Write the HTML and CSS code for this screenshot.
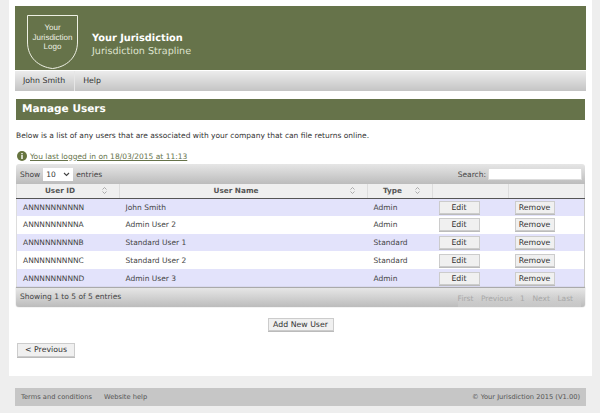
FILE: index.html
```html
<!DOCTYPE html>
<html lang="en">
<head>
<meta charset="utf-8">
<title>Manage Users</title>
<link rel="stylesheet" href="styles.css">
</head>
<body>
<div class="page">
  <header class="banner">
    <svg class="crest" width="54" height="56" viewBox="0 0 54 56">
      <path d="M1.500 1.500H51.500V28C51.500 44 40 53 26.500 54.500C13 53 1.500 44 1.500 28Z" fill="none" stroke="#eef0e4" stroke-width="1"/>
    </svg>
    <div class="crest-text">Your<br>Jurisdiction<br>Logo</div>
    <div class="brand">
      <div class="brand-name">Your Jurisdiction</div>
      <div class="brand-line">Jurisdiction Strapline</div>
    </div>
  </header>
  <nav class="nav">
    <a class="nav-item nav-first">John Smith</a>
    <a class="nav-item">Help</a>
  </nav>
  <main class="content">
    <h1 class="title">Manage Users</h1>
    <p class="intro">Below is a list of any users that are associated with your company that can file returns online.</p>
    <p class="last-login">
      <svg class="info" width="10" height="10" viewBox="0 0 10 10"><circle cx="5" cy="5" r="5" fill="#66743f"/><rect x="4.300" y="4" width="1.400" height="4" fill="#fff"/><rect x="4.300" y="2" width="1.400" height="1.300" fill="#fff"/></svg>
      <a class="login-link">You last logged in on 18/03/2015 at 11:13</a>
    </p>
    <section class="grid">
      <div class="bar bar-top">
        <label class="len">Show <span class="select">10<svg width="7" height="5" viewBox="0 0 7 5"><path d="M1 1l2.500 2.500L6 1" fill="none" stroke="#444" stroke-width="1.100"/></svg></span> entries</label>
        <label class="search">Search: <span class="search-box"></span></label>
      </div>
      <table class="users">
        <colgroup><col class="c1"><col class="c2"><col class="c3"><col class="c4"><col class="c5"></colgroup>
        <thead>
          <tr>
            <th><span class="th-label th-id">User ID</span><svg class="sort" width="5" height="7" viewBox="0 0 5 7"><path d="M.5 2.500L2.500.5l2 2M.5 4.500l2 2 2-2" fill="none" stroke="#999" stroke-width=".8"/></svg></th>
            <th><span class="th-label th-name">User Name</span><svg class="sort" width="5" height="7" viewBox="0 0 5 7"><path d="M.5 2.500L2.500.5l2 2M.5 4.500l2 2 2-2" fill="none" stroke="#999" stroke-width=".8"/></svg></th>
            <th><span class="th-label th-type">Type</span><svg class="sort" width="5" height="7" viewBox="0 0 5 7"><path d="M.5 2.500L2.500.5l2 2M.5 4.500l2 2 2-2" fill="none" stroke="#999" stroke-width=".8"/></svg></th>
            <th></th>
            <th></th>
          </tr>
        </thead>
        <tbody>
          <tr class="odd"><td>ANNNNNNNNNN</td><td>John Smith</td><td>Admin</td><td><button class="btn btn-edit">Edit</button></td><td><button class="btn btn-remove">Remove</button></td></tr>
          <tr><td>ANNNNNNNNNA</td><td>Admin User 2</td><td>Admin</td><td><button class="btn btn-edit">Edit</button></td><td><button class="btn btn-remove">Remove</button></td></tr>
          <tr class="odd"><td>ANNNNNNNNNB</td><td>Standard User 1</td><td>Standard</td><td><button class="btn btn-edit">Edit</button></td><td><button class="btn btn-remove">Remove</button></td></tr>
          <tr><td>ANNNNNNNNNC</td><td>Standard User 2</td><td>Standard</td><td><button class="btn btn-edit">Edit</button></td><td><button class="btn btn-remove">Remove</button></td></tr>
          <tr class="odd"><td>ANNNNNNNNND</td><td>Admin User 3</td><td>Admin</td><td><button class="btn btn-edit">Edit</button></td><td><button class="btn btn-remove">Remove</button></td></tr>
        </tbody>
      </table>
      <div class="bar bar-bottom">
        <span class="showing">Showing 1 to 5 of 5 entries</span>
        <span class="pager"><a>First</a><a>Previous</a><a>1</a><a>Next</a><a>Last</a></span>
      </div>
    </section>
    <div class="add-row"><button class="btn btn-add">Add New User</button></div>
    <button class="btn btn-prev">&lt; Previous</button>
  </main>
</div>
<footer class="footer">
  <div class="foot-links"><a>Terms and conditions</a><a>Website help</a></div>
  <div>© Your Jurisdiction 2015 (V1.00)</div>
</footer>
</body>
</html>
```

FILE: styles.css
```css
* { box-sizing: border-box; }
html, body { margin: 0; padding: 0; }
body {
  height: 413px;
  overflow: hidden;
  background: #eeeeee;
  font-family: "DejaVu Sans", Verdana, sans-serif;
  font-size: 7.500px;
  color: #444;
  text-rendering: geometricPrecision;
}
.page {
  width: 583px;
  height: 376px;
  margin-left: 9px;
  padding: 6px 6px 0;
  background: #fff;
}
.banner {
  position: relative;
  display: flex;
  align-items: flex-start;
  height: 64px;
  background: #66734a;
  color: #fff;
}
.crest { position: absolute; left: 11px; top: 8px; }
.crest-text {
  position: absolute;
  left: 11px;
  top: 17px;
  width: 53px;
  text-align: center;
  font-family: "Liberation Sans", Arial, sans-serif;
  font-size: 8px;
  line-height: 9.500px;
  color: #eef0e4;
}
.brand { margin: 27px 0 0 77px; }
.brand-name { font-size: 9.800px; font-weight: bold; line-height: 12.500px; }
.brand-line { font-size: 9.600px; line-height: 12.500px; color: #dfe3cf; }
.nav {
  display: flex;
  height: 20px;
  margin-top: 1px;
  background: linear-gradient(#ececec, #c4c4c4);
  color: #333;
  font-size: 7.800px;
}
.nav-item { padding: 0 8px; line-height: 20px; }
.nav-first { border-right: 1px solid #e6e6e6; padding-right: 9px; }
.content { padding: 0 1px; }
.title {
  margin: 8px 0 0;
  height: 21px;
  padding-left: 6px;
  background: #66734a;
  color: #fff;
  font-size: 10.500px;
  line-height: 21px;
  font-weight: bold;
}
.intro { margin: 10px 0 0; line-height: 11px; height: 11px; color: #333; }
.last-login { display: flex; align-items: center; gap: 3px; margin: 9px 0 0; height: 12px; padding-left: 1px; }
.login-link { color: #66734a; text-decoration: underline; }
.info { flex: none; }
.grid { margin-top: 2px; }
.bar {
  display: flex;
  align-items: center;
  justify-content: space-between;
  background: linear-gradient(#e6e6e6, #bcbcbc);
  padding: 0 4px;
}
.bar-top { height: 20px; border-radius: 3px 3px 0 0; }
.bar-bottom { height: 20px; border-radius: 0 0 3px 3px; border-top: 1px solid #aaa; box-shadow: 0 0 1px #888; }
.showing { margin-top: -1px; }
.len { display: flex; align-items: center; gap: 3px; }
.select {
  display: flex;
  align-items: center;
  justify-content: space-between;
  width: 30px;
  height: 13px;
  padding: 0 3px;
  background: #fff;
  color: #333;
}
.search { display: flex; align-items: center; gap: 2px; }
.search-box { display: block; width: 94px; height: 12px; background: #fff; border: 1px solid #ddd; margin-right: -1px; }
.users { width: 100%; border-collapse: collapse; table-layout: fixed; background: #fff; border-left: 1px solid #ddd; border-right: 1px solid #ccc; }
.c1 { width: 103px; }
.c2 { width: 248px; }
.c3 { width: 65px; }
.c4 { width: 76px; }
.c5 { width: 76px; }
.users th {
  position: relative;
  height: 14px;
  padding: 0;
  background: #efefef;
  border-left: 1px solid #ddd;
  border-bottom: 1px solid #555;
  color: #555;
  font-weight: bold;
  font-size: 7.300px;
  text-align: center;
}
.users th:first-child { border-left: 0; }
.th-label { display: block; }
.th-id { padding-right: 16px; }
.th-name { padding-right: 15px; }
.th-type { padding-right: 15px; }
.sort { position: absolute; right: 12px; top: 3px; }
.users td { height: 17.800px; padding: 0 6px; color: #444; font-size: 7.500px; }
.odd td { background: #e3e3fb; }
.btn {
  font-family: inherit;
  font-size: 7.800px;
  text-rendering: geometricPrecision;
  color: #333;
  background: #f0f0f0;
  border: 1px solid #ccc;
  border-radius: 0;
  padding: 0;
  box-shadow: 0 1px 0 #bbb;
}
.btn-edit { display: block; width: 41px; height: 13px; }
.btn-remove { display: block; width: 40px; height: 13px; }
.pager { display: flex; gap: 7.500px; color: #a8a8a8; padding: 0 8px 0 0; align-self: flex-end; line-height: 16px; background: linear-gradient(transparent, rgba(210,210,210,.5)); }
.add-row { margin-top: 11px; text-align: center; }
.btn-add { width: 66px; height: 13px; }
.btn-prev { display: block; width: 58px; height: 14px; margin: 12px 0 0 1px; }
.footer {
  display: flex;
  align-items: center;
  justify-content: space-between;
  width: 571px;
  height: 18px;
  margin: 12px 0 0 15px;
  padding: 0 6px;
  background: #c6c6c6;
  color: #555;
  font-size: 6.700px;
}
.foot-links { display: flex; gap: 12px; }
```
